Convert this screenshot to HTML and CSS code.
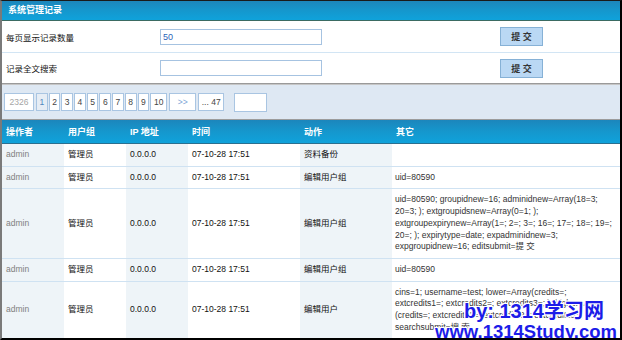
FILE: index.html
```html
<!DOCTYPE html>
<html>
<head>
  <meta charset="utf-8">
  <link rel="stylesheet" href="styles.css">
</head>

<body>
  <div class="frame">
    <div class="title">系统管理记录</div>

    <div class="form">
      <div class="form-row">
        <span class="label">每页显示记录数量</span>
        <input type="text" class="field" value="50">
        <button class="submit">提 交</button>
      </div>
      <div class="form-row">
        <span class="label">记录全文搜索</span>
        <input type="text" class="field">
        <button class="submit">提 交</button>
      </div>
    </div>

    <div class="pager">
      <span class="pg pg-total">2326</span>
      <span class="pg pg-num current">1</span>
      <span class="pg pg-num">2</span>
      <span class="pg pg-num">3</span>
      <span class="pg pg-num">4</span>
      <span class="pg pg-num">5</span>
      <span class="pg pg-num">6</span>
      <span class="pg pg-num">7</span>
      <span class="pg pg-num">8</span>
      <span class="pg pg-num">9</span>
      <span class="pg pg-ten">10</span>
      <span class="pg pg-next">&gt;&gt;</span>
      <span class="pg pg-last">... 47</span>
      <input type="text" class="pg-jump">
    </div>

    <table class="logs">
      <tr class="head">
        <th class="c1">操作者</th>
        <th class="c2">用户组</th>
        <th class="c3">IP 地址</th>
        <th class="c4">时间</th>
        <th class="c5">动作</th>
        <th class="c6">其它</th>
      </tr>
      <tr>
        <td class="c1">admin</td>
        <td class="c2">管理员</td>
        <td class="c3">0.0.0.0</td>
        <td class="c4">07-10-28 17:51</td>
        <td class="c5">资料备份</td>
        <td class="c6"></td>
      </tr>
      <tr>
        <td class="c1">admin</td>
        <td class="c2">管理员</td>
        <td class="c3">0.0.0.0</td>
        <td class="c4">07-10-28 17:51</td>
        <td class="c5">编辑用户组</td>
        <td class="c6">uid=80590</td>
      </tr>
      <tr>
        <td class="c1">admin</td>
        <td class="c2">管理员</td>
        <td class="c3">0.0.0.0</td>
        <td class="c4">07-10-28 17:51</td>
        <td class="c5">编辑用户组</td>
        <td class="c6">uid=80590; groupidnew=16; adminidnew=Array(18=3; 20=3; ); extgroupidsnew=Array(0=1; ); extgroupexpirynew=Array(1=; 2=; 3=; 16=; 17=; 18=; 19=; 20=; ); expirytype=date; expadminidnew=3; expgroupidnew=16; editsubmit=提 交</td>
      </tr>
      <tr>
        <td class="c1">admin</td>
        <td class="c2">管理员</td>
        <td class="c3">0.0.0.0</td>
        <td class="c4">07-10-28 17:51</td>
        <td class="c5">编辑用户组</td>
        <td class="c6">uid=80590</td>
      </tr>
      <tr>
        <td class="c1">admin</td>
        <td class="c2">管理员</td>
        <td class="c3">0.0.0.0</td>
        <td class="c4">07-10-28 17:51</td>
        <td class="c5">编辑用户</td>
        <td class="c6">cins=1; username=test; lower=Array(credits=; extcredits1=; extcredits2=; extcredits3=; ); higher=Array (credits=; extcredits1=; extcredits2=; extcredits3=; ); searchsubmit=搜 索</td>
      </tr>
    </table>

    <div class="watermark">
      <div class="wm-by">by: 1314学习网</div>
      <div class="wm-url">www.1314Study.com</div>
    </div>
  </div>
</body>
</html>
```

FILE: styles.css
```css
body {
  margin: 0;
  font-family: "Liberation Sans", "Noto Sans CJK SC", sans-serif;
  font-size: 8.5px;
  color: #111;
}

.frame {
  position: relative;
  width: 622px;
  height: 340px;
  box-sizing: border-box;
  border-top: 1px solid #1a1a1a;
  border-left: 2px solid #7a7a7a;
  border-right: 2px solid #000;
  border-bottom: 2px solid #000;
  overflow: hidden;
  background: #fff;
}

.title {
  height: 19px;
  line-height: 18px;
  padding-left: 6px;
  color: #fff;
  font-weight: bold;
  font-size: 9px;
  background: linear-gradient(#1d86bb, #1597cd 50%, #0fa2db);
  border-bottom: 1px solid #3b6b62;
}

.form {
  border-bottom: 1px solid #9a9a9a;
}

.form-row {
  display: flex;
  align-items: center;
  height: 31px;
}

.form-row + .form-row {
  border-top: 1px solid #d2e5f4;
  height: 30px;
}

.label {
  width: 154px;
  padding-left: 4px;
}

.field {
  width: 162px;
  height: 16px;
  box-sizing: border-box;
  border: 1px solid #a6c3e1;
  padding: 0 2px;
  font-family: inherit;
  font-size: 9px;
  color: #2b64b8;
  outline: none;
}

.submit {
  margin-left: 178px;
  width: 43px;
  height: 19px;
  padding: 0;
  border: 1px solid #86b1d6;
  background: #bad8f4;
  font-family: inherit;
  font-size: 9px;
  font-weight: bold;
  color: #333;
}

.pager {
  display: flex;
  align-items: center;
  height: 34px;
  padding-left: 2px;
  background: #dee8f3;
  border-top: 1px solid #c6c6c6;
  border-bottom: 1px solid #9c9c9c;
}

.pg {
  height: 16px;
  line-height: 16px;
  border: 1px solid #a9c5e2;
  background: #fff;
  color: #444;
  text-align: center;
  margin-right: 1px;
}

.pg-total {
  width: 28px;
  color: #a5a5a5;
  margin-right: 2px;
}

.pg-num {
  width: 9.7px;
}

.pg-num.current {
  background: #e6edf5;
  color: #4f86bd;
}

.pg-ten {
  width: 15px;
  margin-right: 2px;
}

.pg-next {
  width: 25px;
  color: #7aa3d6;
  margin-right: 2px;
}

.pg-last {
  width: 24px;
}

.pg-jump {
  margin-left: 9px;
  width: 33px;
  height: 19px;
  box-sizing: border-box;
  border: 1px solid #a9c5e2;
  background: #fff;
  outline: none;
}

.logs {
  width: 618px;
  border-collapse: collapse;
  table-layout: fixed;
}

.logs th {
  height: 23px;
  padding: 0 0 0 4px;
  text-align: left;
  color: #fff;
  font-size: 9px;
  background: linear-gradient(#1c86bc, #1597cd 50%, #0fa2db);
  border-bottom: 1px solid #2a6f8f;
}

.logs td {
  padding: 5px 4px;
  line-height: 11.7px;
  vertical-align: middle;
  border-bottom: 1px solid #cfe2f2;
  word-wrap: break-word;
}

.c1 { width: 58px; }
.c2 { width: 58px; }
.c3 { width: 58px; }
.c4 { width: 108px; }
.c5 { width: 88px; }

.logs td.c1 {
  color: #808080;
}

.logs td.c1,
.logs td.c3,
.logs td.c5 {
  background: #eef4f8;
}

.logs td.c6 {
  padding-left: 3px;
  padding-right: 8px;
  color: #333;
}

/* watermark stamped over the lower right corner */
.watermark {
  position: absolute;
  right: 3px;
  bottom: -4px;
  text-align: right;
  font-weight: bold;
  color: #1c1ce8;
  text-shadow: 1px 0 0 #fff, -1px 0 0 #fff, 0 1px 0 #fff, 0 -1px 0 #fff,
    1px 1px 0 #fff, -1px -1px 0 #fff, 1px -1px 0 #fff, -1px 1px 0 #fff;
}

.wm-by {
  font-size: 20px;
  line-height: 22px;
  margin-right: 13px;
}

.wm-url {
  font-size: 18.5px;
  line-height: 20px;
}
```
